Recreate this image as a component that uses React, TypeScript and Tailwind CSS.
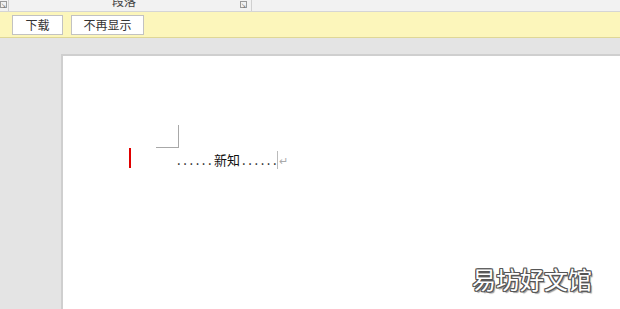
export default function App() {
  const font = "font-['Microsoft_YaHei','Noto_Sans_CJK_SC',sans-serif]";
  return (
    <div className={`w-[620px] h-[309px] overflow-hidden flex flex-col bg-[#e4e4e4] ${font}`}>
      {/* ribbon bottom strip */}
      <div className="h-[12px] shrink-0 bg-[#f2f2f2] border-b border-[#d5d5d5] flex items-end text-[#444] relative overflow-hidden">
        <span className="absolute left-0 top-[1px] w-[7px] h-[7px] border border-[#9a9a9a] text-[5px] leading-none">↘</span>
        <div className="absolute left-[8px] top-0 h-[11px] w-px bg-[#d0d0d0]" />
        <span className="absolute left-[112px] top-[-7px] text-[12px] leading-[16px]">段落</span>
        <span className="absolute left-[240px] top-[1px] w-[7px] h-[7px] border border-[#9a9a9a] text-[5px] leading-none">↘</span>
        <div className="absolute left-[251px] top-0 h-[11px] w-px bg-[#d0d0d0]" />
      </div>
      {/* yellow notification bar */}
      <div className="h-[26px] shrink-0 bg-[#fcf6bb] border-b border-[#dfd797] flex items-center gap-[8px] pl-[12px] pt-[1px]">
        <button className="w-[51px] h-[20px] bg-white border border-[#c2c2c2] text-[12px] text-[#333] leading-none">下载</button>
        <button className="w-[73px] h-[20px] bg-white border border-[#c2c2c2] text-[12px] text-[#333] leading-none">不再显示</button>
      </div>
      {/* document area */}
      <div className="flex-1 pt-[16px] pl-[61px] relative">
        <div className="h-full bg-white border-l-2 border-t-2 border-[#cfcfcf]">
          <div className="pt-[69px]">
            <div className="ml-[93px] w-[23px] h-[23px] border-r border-b border-[#a8a8a8]" />
            <div className="flex items-start">
              <div className="ml-[66px] w-[2px] h-[20px] bg-[#e00000]" />
              <div className="ml-[46px] mt-[3px] flex text-[13px] leading-[18px] text-[#111] font-['Noto_Sans_CJK_SC',sans-serif]">
                <span className="w-[37px] tracking-[2.6px]">......</span>
                <span className="w-[28px]">新知</span>
                <span className="w-[35px] tracking-[2.6px]">......</span>
              </div>
              <span className="mt-[3px] text-[11px] leading-[18px] text-[#aaa] border-l border-[#bbb] pl-[1px]">↵</span>
            </div>
          </div>
        </div>
        <div className="absolute right-[28px] bottom-[16px] text-[24px] leading-[28px] text-white font-['Noto_Sans_CJK_SC',sans-serif] [text-shadow:1px_0_0_#555,-1px_0_0_#555,0_1px_0_#555,0_-1px_0_#555,1px_1px_0_#555,-1px_-1px_0_#555,1px_-1px_0_#555,-1px_1px_0_#555,2px_2px_1px_#999]">
          易坊好文馆
        </div>
      </div>
    </div>
  );
}
